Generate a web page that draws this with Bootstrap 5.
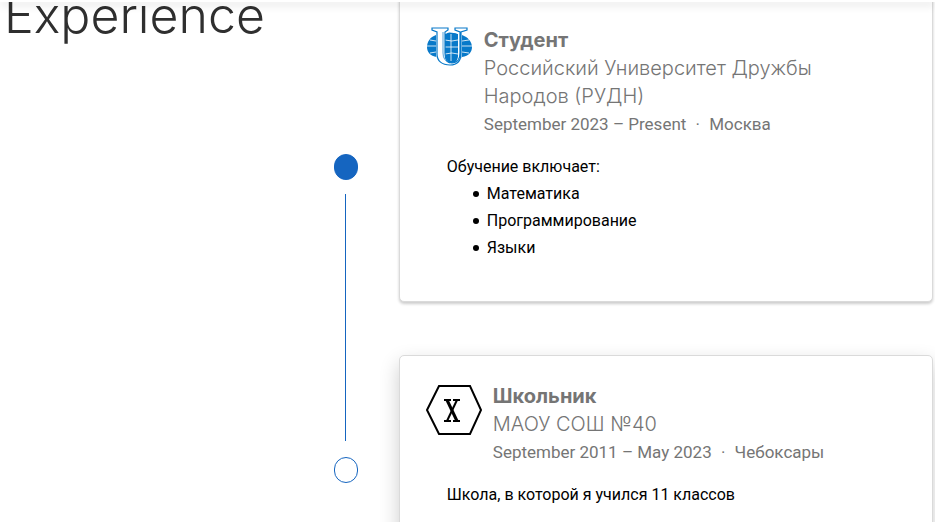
<!DOCTYPE html>
<html lang="ru">
<head>
<meta charset="utf-8">
<meta name="viewport" content="width=device-width, initial-scale=1">
<title>Experience</title>
<link href="https://cdn.jsdelivr.net/npm/bootstrap@5.3.0/dist/css/bootstrap.min.css" rel="stylesheet">
<style>
body { font-family: Roboto, sans-serif; font-size: 16px; line-height: 27px; color: #000; background: #fff; overflow-x: hidden; }
.topbar { height: 2px; background: #fff; box-shadow: 0 2px 8px rgba(0,0,0,.25); }
.experience { margin-top: -28px; }
.heading-col { flex: 0 0 35.7%; padding-left: 4px; }
.heading-col h1 { font-family: Inter, sans-serif; font-weight: 300; font-size: 50px; line-height: 58px; padding-top: 12px; color: #2f2f2f; }
.timeline { width: 24px; padding-top: 180px; }
.dot { width: 24px; height: 26px; border: 1px solid #1565c0; border-radius: 12px; }
.dot-full { background: #1565c0; }
.track { width: 1px; height: 247px; margin: 14px 0 16px; background: #1565c0; }
.cards { margin-left: 41px; padding-right: 2px; gap: 53px; }
.job { border: 1px solid #dadada; border-radius: 5px; box-shadow: 0 2px 3px rgba(0,0,0,.2); }
.job-raised { box-shadow: 0 8px 20px rgba(0,0,0,.2); }
.job .card-body { padding: 26px 26px 40px; }
.job-first .card-body { padding-top: 51px; }
.job-title { font-family: Inter, sans-serif; font-size: 20px; line-height: 28px; color: #757575; margin: 0; }
.job-title strong { font-weight: 700; }
.job-title .org { font-weight: 300; }
.meta { color: #757575; line-height: 28px; font-size: 17px; }
.meta .sep { margin: 0 5px; }
.job-text { margin: 15px 0 0 21px; }
.job-text ul { padding-left: 26px; list-style: none; }
.job-text li::before { content: ""; display: inline-block; width: 6px; height: 6px; margin-right: 8px; border-radius: 50%; background: #000; vertical-align: 2px; }
.logo-rudn { width: 46px; height: 40px; margin-right: 12px; margin-top: 1px; }
.logo-school { width: 58px; height: 52px; margin-right: 9px; margin-top: 2px; }
</style>
<script src="https://cdn.jsdelivr.net/npm/bootstrap@5.3.0/dist/js/bootstrap.bundle.min.js"></script>
</head>
<body>
<header class="topbar sticky-top"></header>
<main class="experience d-flex">
  <div class="heading-col"><h1 class="m-0">Experience</h1></div>
  <div class="timeline d-flex flex-column align-items-center flex-shrink-0">
    <span class="dot dot-full"></span>
    <span class="track"></span>
    <span class="dot"></span>
  </div>
  <div class="cards d-flex flex-column flex-fill">
    <article class="card job job-first">
      <div class="card-body">
        <div class="d-flex align-items-start">
          <svg class="logo-rudn flex-shrink-0" viewBox="0 0 46 40" role="img" aria-label="РУДН">
            <path d="M10 8Q24 3 36 8C42 10 46 15 46 20S43 29 36 30C33 35 29 38 24 38S14 35 11 30C4 29 1 25 1 20S4 10 10 8Z" fill="#0879c9"/>
            <path d="M1 19H10M36 19H46M4 13L10 14M36 14L43 13M4 26L10 25M36 25L43 26" fill="none" stroke="#fff" stroke-width=".8"/>
            <path d="M5 0H23V5L20 7V26C20 33 22 36 26 36C31 36 32 32 32 26V7L28 5V0H42V5L36 7V26C36 35 32 40 24 40C15 40 10 35 10 27V7L5 5Z" fill="#fff"/>
            <path d="M19 7Q26 5 32 8V26C32 32 30 35 26 35C22 35 19 32 19 26Z" fill="#0879c9"/>
            <path d="M19 13Q26 15 32 13M19 20H32M19 27Q26 25 32 27M25 7V34" fill="none" stroke="#fff" stroke-width=".8"/>
            <path d="M6 1H22V3L19 5V26C19 33 21 36 26 36C31 36 34 32 34 26V5L29 3V1H41V3L35 5V26C35 34 32 38 24 38C16 38 11 34 11 27V5L6 3Z" fill="none" stroke="#0879c9" stroke-width="1.200"/>
            <path d="M17 5V26Q17 34 24 36" fill="none" stroke="#0879c9" stroke-width=".7"/>
          </svg>
          <div class="pe-3">
            <h2 class="job-title"><strong class="d-block">Студент</strong><span class="org d-block">Российский Университет Дружбы Народов (РУДН)</span></h2>
            <div class="meta">September 2023 – Present <span class="sep">·</span> Москва</div>
          </div>
        </div>
        <div class="job-text">
          <p class="m-0">Обучение включает:</p>
          <ul class="m-0"><li>Математика</li><li>Программирование</li><li>Языки</li></ul>
        </div>
      </div>
    </article>
    <article class="card job job-raised">
      <div class="card-body">
        <div class="d-flex align-items-start">
          <svg class="logo-school flex-shrink-0" viewBox="0 0 58 52" role="img" aria-label="Школа">
            <path d="M13 2H44L55 26L44 50H13L1 26Z" fill="#fff" stroke="#000" stroke-width="2"/>
            <path d="M18 16H25M27 16H34M18 37H25M27 37H34" stroke="#000" stroke-width="2"/>
            <path d="M21 16L31 37" stroke="#000" stroke-width="3"/>
            <path d="M31 16L21 37" stroke="#000" stroke-width="2"/>
          </svg>
          <div>
            <h2 class="job-title"><strong class="d-block">Школьник</strong><span class="org d-block">МАОУ СОШ №40</span></h2>
            <div class="meta">September 2011 – May 2023 <span class="sep">·</span> Чебоксары</div>
          </div>
        </div>
        <div class="job-text"><p class="m-0">Школа, в которой я учился 11 классов</p></div>
      </div>
    </article>
  </div>
</main>
</body>
</html>
